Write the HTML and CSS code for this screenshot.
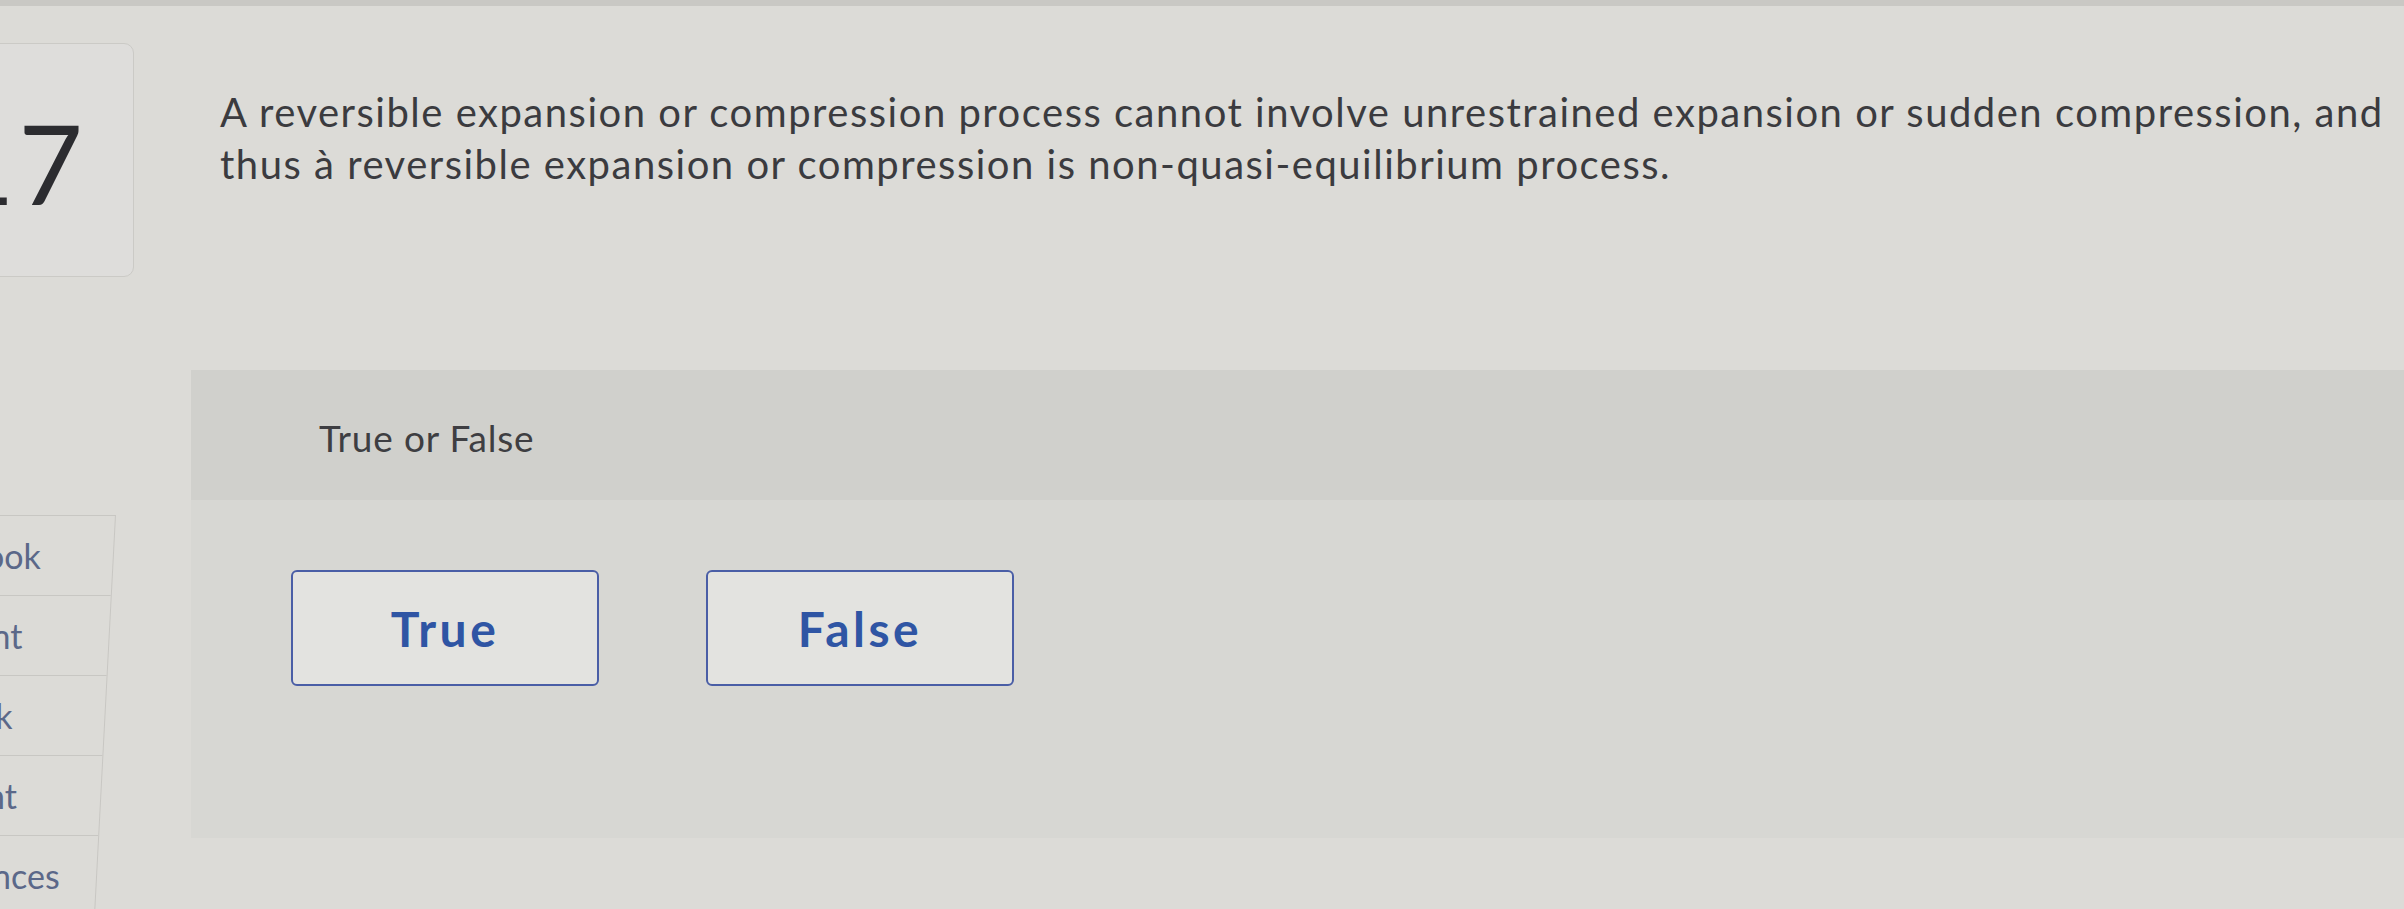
FILE: index.html
```html
<!DOCTYPE html>
<html lang="en">
<head>
<meta charset="utf-8">
<title>Question 17</title>
<link rel="stylesheet" href="styles.css">
</head>
<body>
<div class="topstrip"></div>
<div class="question">
  <div class="qnum"><span>17</span></div>
  <p class="qtext">A reversible expansion or compression process cannot involve unrestrained expansion or sudden compression, and<br>thus à reversible expansion or compression is non-quasi-equilibrium process.</p>
</div>
<div class="main">
  <nav class="sidebar">
    <div class="sitem"><span>eBook</span></div>
    <div class="sitem"><span>Hint</span></div>
    <div class="sitem"><span>Ask</span></div>
    <div class="sitem"><span>Print</span></div>
    <div class="sitem"><span>References</span></div>
  </nav>
  <section class="panel">
    <div class="phead">True or False</div>
    <div class="pbody">
      <button class="choice">True</button>
      <button class="choice">False</button>
    </div>
  </section>
</div>
</body>
</html>
```

FILE: styles.css
```css
html, body {
  margin: 0;
  padding: 0;
}
body {
  width: 2404px;
  height: 909px;
  overflow: hidden;
  background: #dcdbd7;
  font-family: Lato, "Liberation Sans", sans-serif;
  color: #3a3a3e;
}
.topstrip {
  height: 6px;
  background: #c9c8c4;
}
.question {
  display: flex;
  align-items: flex-start;
  margin-top: 37px;
  height: 327px;
}
.qnum {
  width: 232px;
  height: 234px;
  margin-left: -98px;
  box-sizing: border-box;
  border: 1px solid #cbcac6;
  border-radius: 10px;
  background: #dedddb;
  display: flex;
  align-items: center;
  justify-content: flex-end;
  padding-right: 46px;
  padding-top: 4px;
  flex: none;
}
.qnum span {
  font-size: 111px;
  line-height: 1;
  color: #2c2c30;
  letter-spacing: 4px;
}
.qtext {
  margin: 43px 0 0 86px;
  font-size: 40px;
  line-height: 52px;
  letter-spacing: 1.5px;
  color: #3b3b3f;
  white-space: nowrap;
}
.main {
  display: flex;
  align-items: flex-start;
}
.sidebar {
  width: 238px;
  margin-left: -123px;
  margin-top: 145px;
  border-top: 1px solid #c8c7c3;
  border-right: 1px solid #c8c7c3;
  flex: none;
  transform: skewX(-3deg);
  transform-origin: top left;
}
.sitem {
  height: 79px;
  border-bottom: 1px solid #c8c7c3;
  display: flex;
  align-items: center;
  justify-content: center;
  font-size: 34px;
  color: #5b6889;
}
.sitem span {
  display: inline-block;
  transform: skewX(3deg);
}
.panel {
  margin-left: 75px;
  flex: 1;
}
.phead {
  height: 130px;
  box-sizing: border-box;
  padding: 46px 0 0 128px;
  background: #d0d0cc;
  font-size: 37px;
  line-height: 1.2;
  letter-spacing: 0.8px;
  color: #3e3e42;
}
.pbody {
  height: 338px;
  box-sizing: border-box;
  padding: 70px 0 0 100px;
  background: #d7d7d3;
  display: flex;
  align-items: flex-start;
  gap: 107px;
}
.choice {
  width: 308px;
  height: 116px;
  border: 2px solid #4a5ea6;
  border-radius: 6px;
  background: #e3e3e0;
  font-family: Lato, "Liberation Sans", sans-serif;
  font-weight: 700;
  font-size: 48px;
  letter-spacing: 3.5px;
  color: #2f55a4;
  padding: 0;
}
```
